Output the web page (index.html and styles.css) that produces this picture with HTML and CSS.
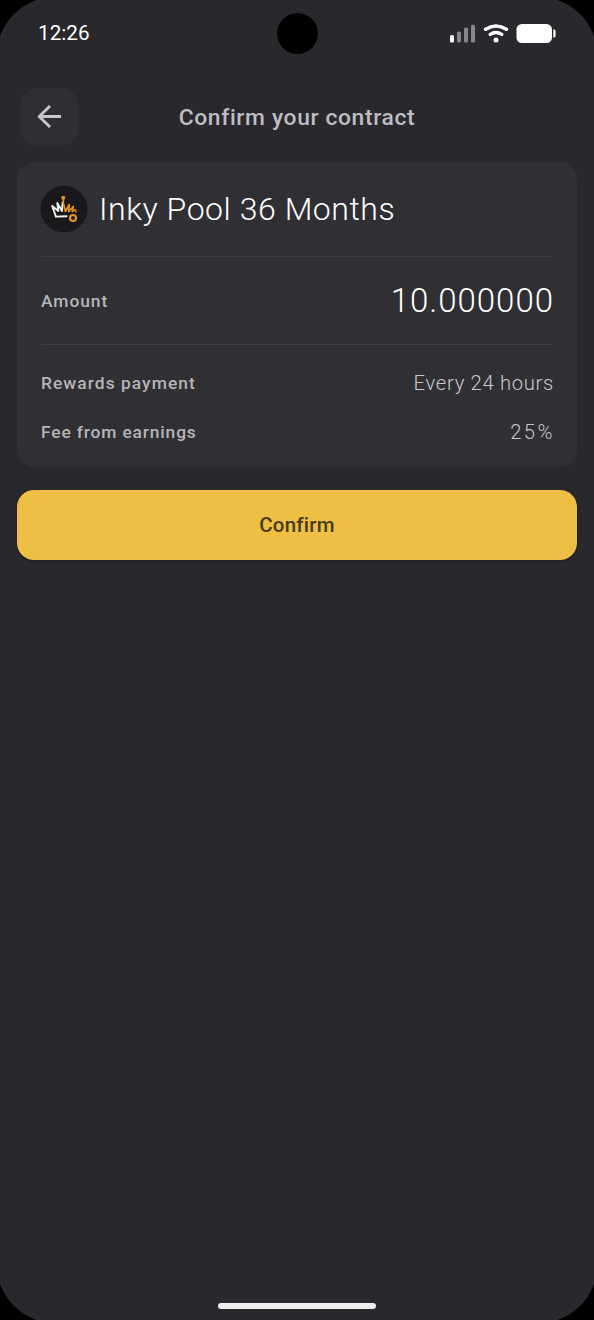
FILE: index.html
```html
<!DOCTYPE html>
<html lang="en">
<head>
<meta charset="utf-8">
<title>Confirm your contract</title>
<link rel="stylesheet" href="styles.css">
</head>
<body>
<main class="screen">
  <div class="status">
    <span class="time">12:26</span>
    <span class="camera"></span>
    <svg class="indicators" width="108" height="24" viewBox="0 0 108 24" fill="#fff">
      <rect x="2" y="14" width="4" height="7.500" rx="1.500"/>
      <g fill="#86868b"><rect x="9" y="10.500" width="4" height="11" rx="1.500"/><rect x="16" y="6.500" width="4" height="15" rx="1.500"/><rect x="23" y="3.800" width="4" height="17.700" rx="1.500"/></g>
      <g fill="none" stroke="#fff" stroke-width="3.400" stroke-linecap="round"><path d="M37.600 8.300Q48 1.600 58.400 8.300"/><path d="M42.200 13.400Q48 9.500 53.800 13.400"/></g>
      <circle cx="48" cy="19" r="2.500"/>
      <rect x="68.500" y="3" width="35.500" height="19" rx="5.500"/>
      <path d="M105.300 8.300Q107.600 8.300 107.600 10.500V14.500Q107.600 16.700 105.300 16.700Z"/>
    </svg>
  </div>
  <header class="header">
    <button class="back" aria-label="Back">
      <svg width="26" height="26" viewBox="0 0 26 26" fill="none" stroke="#c8c7cc" stroke-width="2.900" stroke-linejoin="round"><path d="M25 12.500H3M14 2L3.200 12.500L14 23"/></svg>
    </button>
    <h1 class="title">Confirm your contract</h1>
  </header>
  <section class="card">
    <div class="pool">
      <svg class="logo" width="48" height="48" viewBox="0 0 48 48" fill="none" stroke-linecap="round" stroke-linejoin="round">
        <circle cx="24" cy="24" r="23.500" fill="#19191b"/>
        <path d="M15.800 31.300L12.200 21L18.300 26L17.300 18L22 26L22.600 17.500" stroke="#f4f4f4" stroke-width="1.900"/>
        <path d="M15.800 31.600L26.500 31.300" stroke="#f4f4f4" stroke-width="1.900"/>
        <path d="M23.300 13V18L25.500 26.500L29.300 19.500L28.800 26.500L33.300 21.500L32.300 26.600L35.500 24.600" stroke="#e49220" stroke-width="1.700"/>
        <circle cx="36" cy="26.500" r=".9" fill="#e49220"/>
        <circle cx="23.200" cy="12.700" r="2" fill="#e49220"/>
        <circle cx="33" cy="33" r="3" stroke="#e49220" stroke-width="2.200"/>
      </svg>
      <h2 class="name">Inky Pool 36 Months</h2>
    </div>
    <div class="row amount"><span class="label">Amount</span><span class="total">10.000000</span></div>
    <div class="details">
      <div class="row"><span class="label rewards">Rewards payment</span><span class="value">Every 24 hours</span></div>
      <div class="row"><span class="label fee">Fee from earnings</span><span class="value percent">25%</span></div>
    </div>
  </section>
  <button class="confirm">Confirm</button>
  <div class="home"></div>
</main>
</body>
</html>
```
FILE: styles.css
```css
* { box-sizing: border-box; }
html { background: #000; overflow: hidden; }
body { margin: 0; height: 1320px; overflow: hidden; font-family: Roboto, "Liberation Sans", sans-serif; }
.screen {
  display: flex;
  flex-direction: column;
  width: 600px;
  height: 1326px;
  margin: -3px;
  padding: 3px 20px 14px;
  border-radius: 58px;
  background: #29282d;
}
.status { display: grid; grid-template-columns: 1fr 41px 1fr; align-items: center; height: 66px; padding: 0 21px; }
.time { font-size: 20.700px; color: #fff; }
.camera { width: 41px; height: 41px; border-radius: 50%; background: #000; }
.indicators { justify-self: end; }
.header { display: grid; grid-template-columns: 58px 1fr 58px; align-items: center; height: 58px; margin: 22px 3px 0; }
.back { display: grid; place-items: center; width: 58px; height: 58px; padding: 0; border: 0; border-radius: 17px; background: #2f2e33; }
.title { margin: 0; text-align: center; font-size: 22.800px; font-weight: 500; letter-spacing: .65px; color: #bebdc2; }
.card { height: 305px; margin-top: 16px; padding: 0 24px; border-radius: 17px; background: #302f34; }
.pool { display: flex; align-items: center; gap: 11px; height: 95px; border-bottom: 1px solid #3d3c41; }
.logo { margin-left: -1px; }
.name { margin: 0; font-size: 32px; font-weight: 300; color: #fff; letter-spacing: .55px; }
.row { display: flex; align-items: center; justify-content: space-between; height: 49px; }
.amount { height: 88px; border-bottom: 1px solid #414045; }
.label { padding-top: 1px; font-size: 17.400px; font-weight: 500; color: #b6b5ba; letter-spacing: .95px; }
.rewards { letter-spacing: 1.050px; }
.fee { letter-spacing: .85px; }
.total { margin-right: -1px; font-size: 33px; font-weight: 300; color: #fff; letter-spacing: 1px; }
.details { padding-top: 13px; }
.value { margin-right: -1px; font-size: 20.200px; font-weight: 300; color: #c8c7cc; letter-spacing: .7px; }
.percent { letter-spacing: 2.500px; margin-right: -2px; }
.confirm { display: grid; place-items: center; height: 70px; margin-top: 23px; padding: 0; border: 0; border-radius: 17px; background: #edc045; color: #4a390c; font: 500 20.500px Roboto, "Liberation Sans", sans-serif; letter-spacing: .25px; box-shadow: 0 1px 3px #0006; }
.home { width: 158px; height: 6px; margin: auto auto 0; border-radius: 3px; background: #efeeef; }
```
